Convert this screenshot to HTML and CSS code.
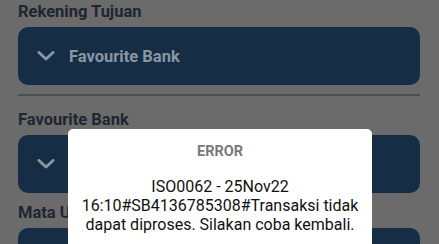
FILE: index.html
```html
<!DOCTYPE html>
<html>
<head>
    <title>Transfer</title>
    <meta charset="utf-8">
    <link rel="stylesheet" href="styles.css">
</head>
<body>
<div class="form">
    <div class="label">Rekening Tujuan</div>
    <div class="select">
        <svg class="chevron" viewBox="0 0 18 10" width="18" height="10">
            <path d="M2 1.5 L9 8 L16 1.5" fill="none" stroke="currentColor" stroke-width="3" stroke-linecap="round" stroke-linejoin="round"/>
        </svg>
        <span>Favourite Bank</span>
    </div>
    <div class="divider"></div>
    <div class="label">Favourite Bank</div>
    <div class="select">
        <svg class="chevron" viewBox="0 0 18 10" width="18" height="10">
            <path d="M2 1.5 L9 8 L16 1.5" fill="none" stroke="currentColor" stroke-width="3" stroke-linecap="round" stroke-linejoin="round"/>
        </svg>
        <span></span>
    </div>
    <div class="label">Mata Uang</div>
    <div class="select"></div>
</div>

<div class="dialog">
    <div class="dialog-title">ERROR</div>
    <div class="dialog-text">ISO0062 - 25Nov22 16:10#SB4136785308#Transaksi tidak dapat diproses. Silakan coba kembali.</div>
</div>
</body>
</html>
```

FILE: styles.css
```css
html, body {
    margin: 0;
    height: 100%;
    overflow: hidden;
}

body {
    background-color: #6b6b6b;
    font-family: Roboto, "Liberation Sans", sans-serif;
}

.form {
    padding: 1px 19px 0 18px;
}

.label {
    font-size: 16.5px;
    line-height: 21px;
    font-weight: bold;
    color: #1f2630;
    padding-bottom: 5px;
}

.select {
    display: flex;
    align-items: center;
    gap: 14px;
    height: 58px;
    padding: 0 19px;
    border-radius: 10px;
    background-color: #152d45;
    color: #8a96a2;
    font-size: 16.5px;
    font-weight: bold;
    margin-bottom: 9px;
}

.chevron {
    flex: none;
}

.divider {
    height: 2px;
    margin: 4px 0 13px;
    background-color: #4b4f55;
}

.dialog {
    position: absolute;
    left: 68px;
    top: 129px;
    width: 304px;
    height: 140px;
    border-radius: 5px;
    background-color: #fff;
    text-align: center;
}

.dialog-title {
    margin-top: 13px;
    font-size: 14.5px;
    font-weight: bold;
    color: #7a7a7a;
    line-height: 20px;
}

.dialog-text {
    margin: 15px 12px 0;
    font-size: 16px;
    line-height: 19px;
    color: #111;
}
```
